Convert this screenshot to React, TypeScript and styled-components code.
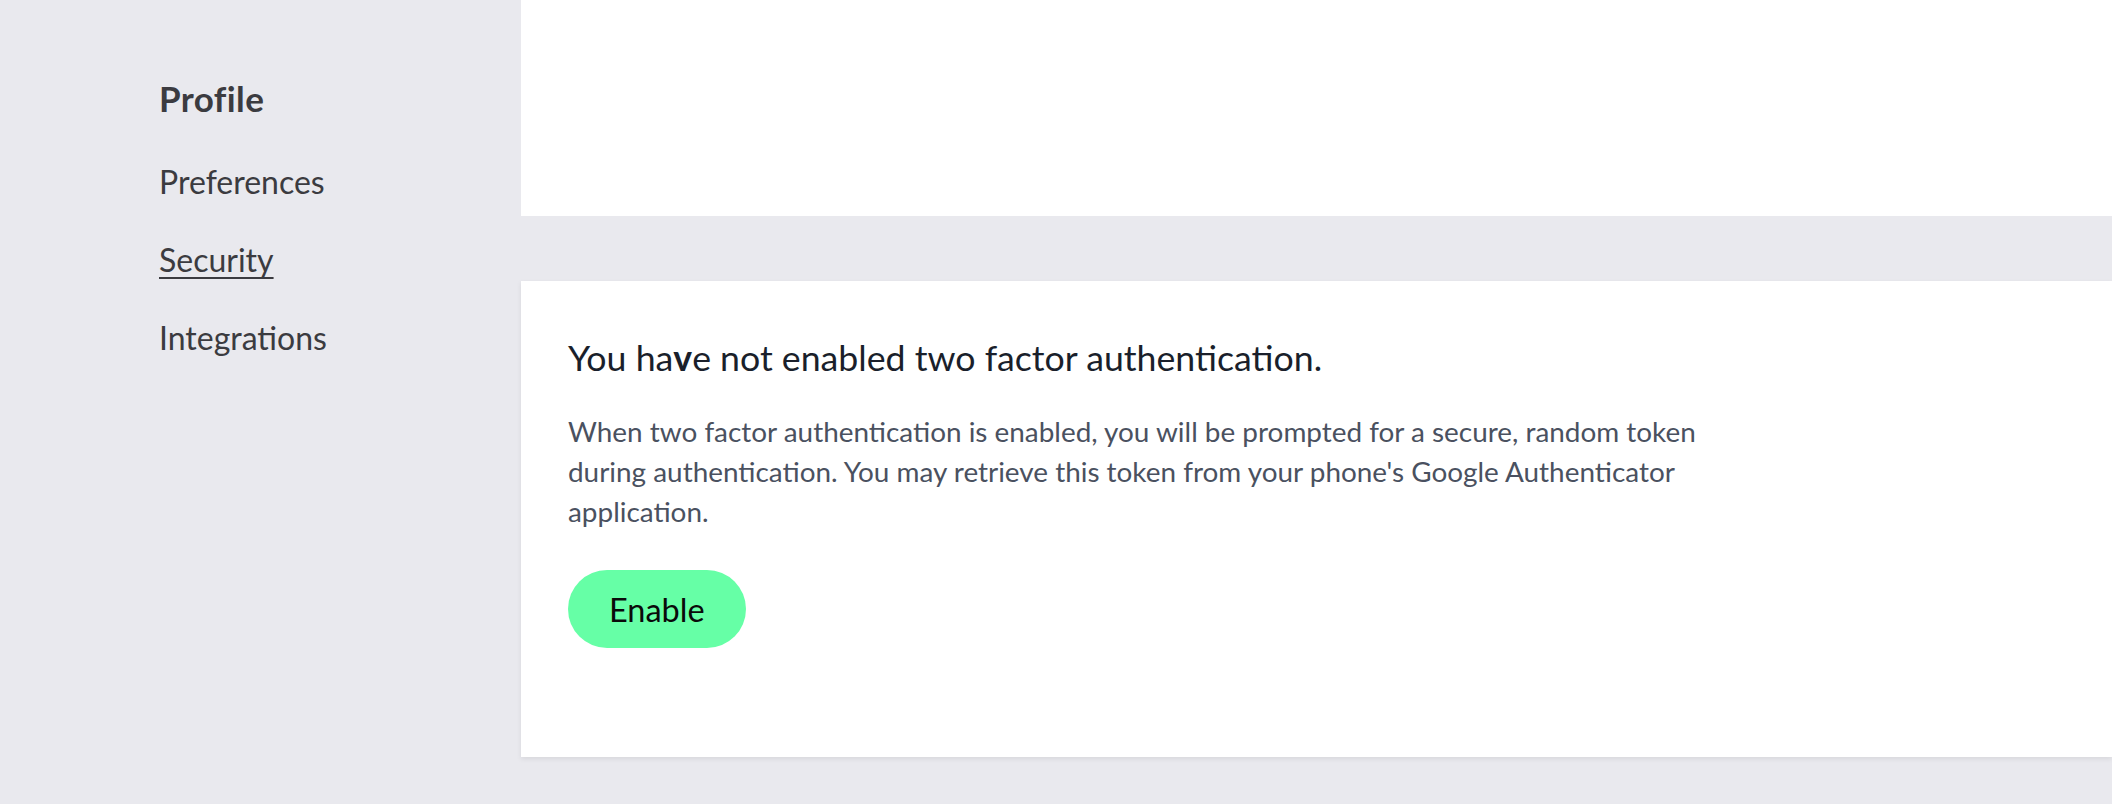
import React from "react";
import { createGlobalStyle, styled } from "styled-components";

const GlobalStyle = createGlobalStyle`
  html, body {
    margin: 0;
    padding: 0;
    background-color: #e9e9ee;
    font-family: Lato, "Open Sans", sans-serif;
  }
`;

const Page = styled.div`
  display: flex;
  min-height: 804px;
  background-color: #e9e9ee;
`;

const Sidebar = styled.nav`
  display: flex;
  flex-direction: column;
  flex: 0 0 521px;
  box-sizing: border-box;
  padding: 78px 0 0 159px;
  gap: 38px;
`;

const NavItem = styled.a<{ $active?: boolean; $title?: boolean }>`
  color: #3b3b40;
  font-size: ${({ $title }) => ($title ? "35px" : "32px")};
  letter-spacing: ${({ $title }) => ($title ? "0.4px" : "0")};
  line-height: 40px;
  font-weight: ${({ $title }) => ($title ? 700 : 400)};
  text-decoration: ${({ $active }) => ($active ? "underline" : "none")};
  text-decoration-thickness: 2px;
  text-underline-offset: 5px;
  margin-bottom: ${({ $title }) => ($title ? "6px" : "0")};
  cursor: pointer;
`;

const Main = styled.main`
  display: flex;
  flex-direction: column;
  flex: 1;
  gap: 65px;
`;

const TopCard = styled.section`
  height: 216px;
  background-color: #ffffff;
`;

const Card = styled.section`
  background-color: #ffffff;
  box-sizing: border-box;
  height: 476px;
  padding: 57px 47px 0;
  box-shadow: 0 2px 5px rgba(0, 0, 0, 0.08);
`;

const Heading = styled.h3`
  margin: 0;
  color: #1a1f2b;
  font-size: 35.7px;
  line-height: 40px;
  font-weight: 400;

  & > b {
    font-weight: 700;
  }
`;

const Text = styled.p`
  margin: 33px 0 0;
  max-width: 1160px;
  color: #4a5160;
  font-size: 27.9px;
  line-height: 40px;
`;

const EnableButton = styled.button`
  margin-top: 39px;
  height: 78px;
  padding: 0 41px;
  border: none;
  border-radius: 39px;
  background-color: #66ffa6;
  color: #0a0a0a;
  font-family: inherit;
  font-size: 32.5px;
  cursor: pointer;

  &:hover {
    opacity: 0.85;
  }
`;

const App = () => {
  return (
    <>
      <GlobalStyle />
      <Page>
        <Sidebar>
          <NavItem $title>Profile</NavItem>
          <NavItem>Preferences</NavItem>
          <NavItem $active>Security</NavItem>
          <NavItem>Integrations</NavItem>
        </Sidebar>
        <Main>
          <TopCard />
          <Card>
            <Heading>
              You ha<b>v</b>e not enabled two factor authentication.
            </Heading>
            <Text>
              When two factor authentication is enabled, you will be prompted
              for a secure, random token during authentication. You may
              retrieve this token from your phone's Google Authenticator
              application.
            </Text>
            <EnableButton>Enable</EnableButton>
          </Card>
        </Main>
      </Page>
    </>
  );
};

export default App;
